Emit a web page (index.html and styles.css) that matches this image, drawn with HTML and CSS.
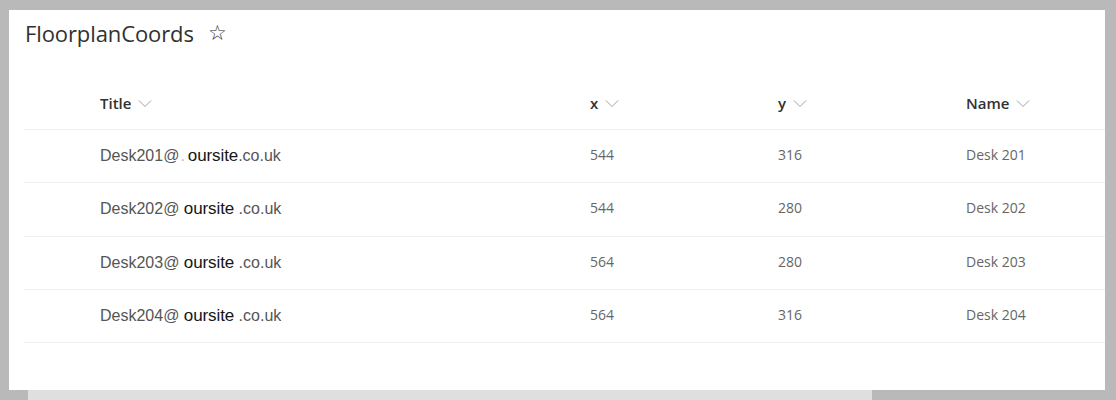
FILE: index.html
```html
<!DOCTYPE html>
<html>
<head>
<meta charset="utf-8">
<link rel="stylesheet" href="styles.css">
</head>
<body>
<div class="frame">
  <div class="card">
    <div class="list-title">
      <h1>FloorplanCoords</h1>
      <span class="star">&#9734;</span>
    </div>
    <div class="table">
      <div class="row head">
        <div class="cell c-title">Title <svg class="chev" viewBox="0 0 16 10"><path d="M1 1.5 L8 8.5 L15 1.5" /></svg></div>
        <div class="cell c-x">x <svg class="chev" viewBox="0 0 16 10"><path d="M1 1.5 L8 8.5 L15 1.5" /></svg></div>
        <div class="cell c-y">y <svg class="chev" viewBox="0 0 16 10"><path d="M1 1.5 L8 8.5 L15 1.5" /></svg></div>
        <div class="cell c-name">Name <svg class="chev" viewBox="0 0 16 10"><path d="M1 1.5 L8 8.5 L15 1.5" /></svg></div>
      </div>
      <div class="row">
        <div class="cell c-title email">Desk201@<span class="dot">.</span><span class="site">oursite</span>.co.uk</div>
        <div class="cell c-x num">544</div>
        <div class="cell c-y num">316</div>
        <div class="cell c-name num">Desk 201</div>
      </div>
      <div class="row">
        <div class="cell c-title email">Desk202@ <span class="site">oursite</span> .co.uk</div>
        <div class="cell c-x num">544</div>
        <div class="cell c-y num">280</div>
        <div class="cell c-name num">Desk 202</div>
      </div>
      <div class="row">
        <div class="cell c-title email">Desk203@ <span class="site">oursite</span> .co.uk</div>
        <div class="cell c-x num">564</div>
        <div class="cell c-y num">280</div>
        <div class="cell c-name num">Desk 203</div>
      </div>
      <div class="row">
        <div class="cell c-title email">Desk204@ <span class="site">oursite</span> .co.uk</div>
        <div class="cell c-x num">564</div>
        <div class="cell c-y num">316</div>
        <div class="cell c-name num">Desk 204</div>
      </div>
    </div>
  </div>
  <div class="scrollbar">
    <div class="thumb"></div>
  </div>
</div>
</body>
</html>
```

FILE: styles.css
```css
html, body {
  margin: 0;
  padding: 0;
}
body {
  background: #b9b9b9;
  width: 1116px;
  height: 400px;
  overflow: hidden;
}
.frame {
  padding: 10px 11px 0 9px;
}
.card {
  background: #ffffff;
  height: 380px;
  box-sizing: border-box;
  padding: 0 0 0 15px;
}
.list-title {
  display: flex;
  align-items: center;
  height: 45px;
  padding-left: 1px;
}
.list-title h1 {
  margin: 0;
  font-family: "Open Sans", sans-serif;
  font-weight: 400;
  font-size: 22px;
  letter-spacing: -0.1px;
  color: #323130;
}
.star {
  margin-left: 14px;
  font-family: "DejaVu Sans", sans-serif;
  font-size: 21px;
  color: #323130;
}
.table {
  margin-top: 27px;
}
.row {
  display: grid;
  grid-template-columns: 566px 188px 188px 1fr;
  height: 53.3px;
  box-sizing: border-box;
  border-bottom: 1px solid #f0efee;
  align-items: center;
}
.row.head {
  height: 48px;
  padding-bottom: 5px;
}
.cell {
  font-family: "Open Sans", sans-serif;
  font-size: 14px;
  color: #605e5c;
  white-space: nowrap;
}
.c-title {
  padding-left: 76px;
}
.head .cell {
  font-size: 15px;
  font-weight: 600;
  color: #323130;
  display: flex;
  align-items: center;
}
.chev {
  width: 14px;
  height: 9px;
  margin-left: 7px;
  fill: none;
  stroke: #a19f9d;
  stroke-width: 1.1;
}
.email {
  font-family: "Liberation Sans", Arial, sans-serif;
  font-size: 16px;
  color: #555555;
}
.site {
  font-size: 17px;
  color: #151515;
  letter-spacing: -0.1px;
}
.dot {
  color: #bbbbbb;
  margin: 0 3px 0 1px;
}
.num {
  font-size: 14px;
  color: #666666;
  padding-bottom: 3px;
}
.scrollbar {
  height: 10px;
  margin-left: -9px;
  margin-right: -11px;
  padding-left: 28px;
}
.thumb {
  width: 844px;
  height: 10px;
  background: #dedfde;
}
```
